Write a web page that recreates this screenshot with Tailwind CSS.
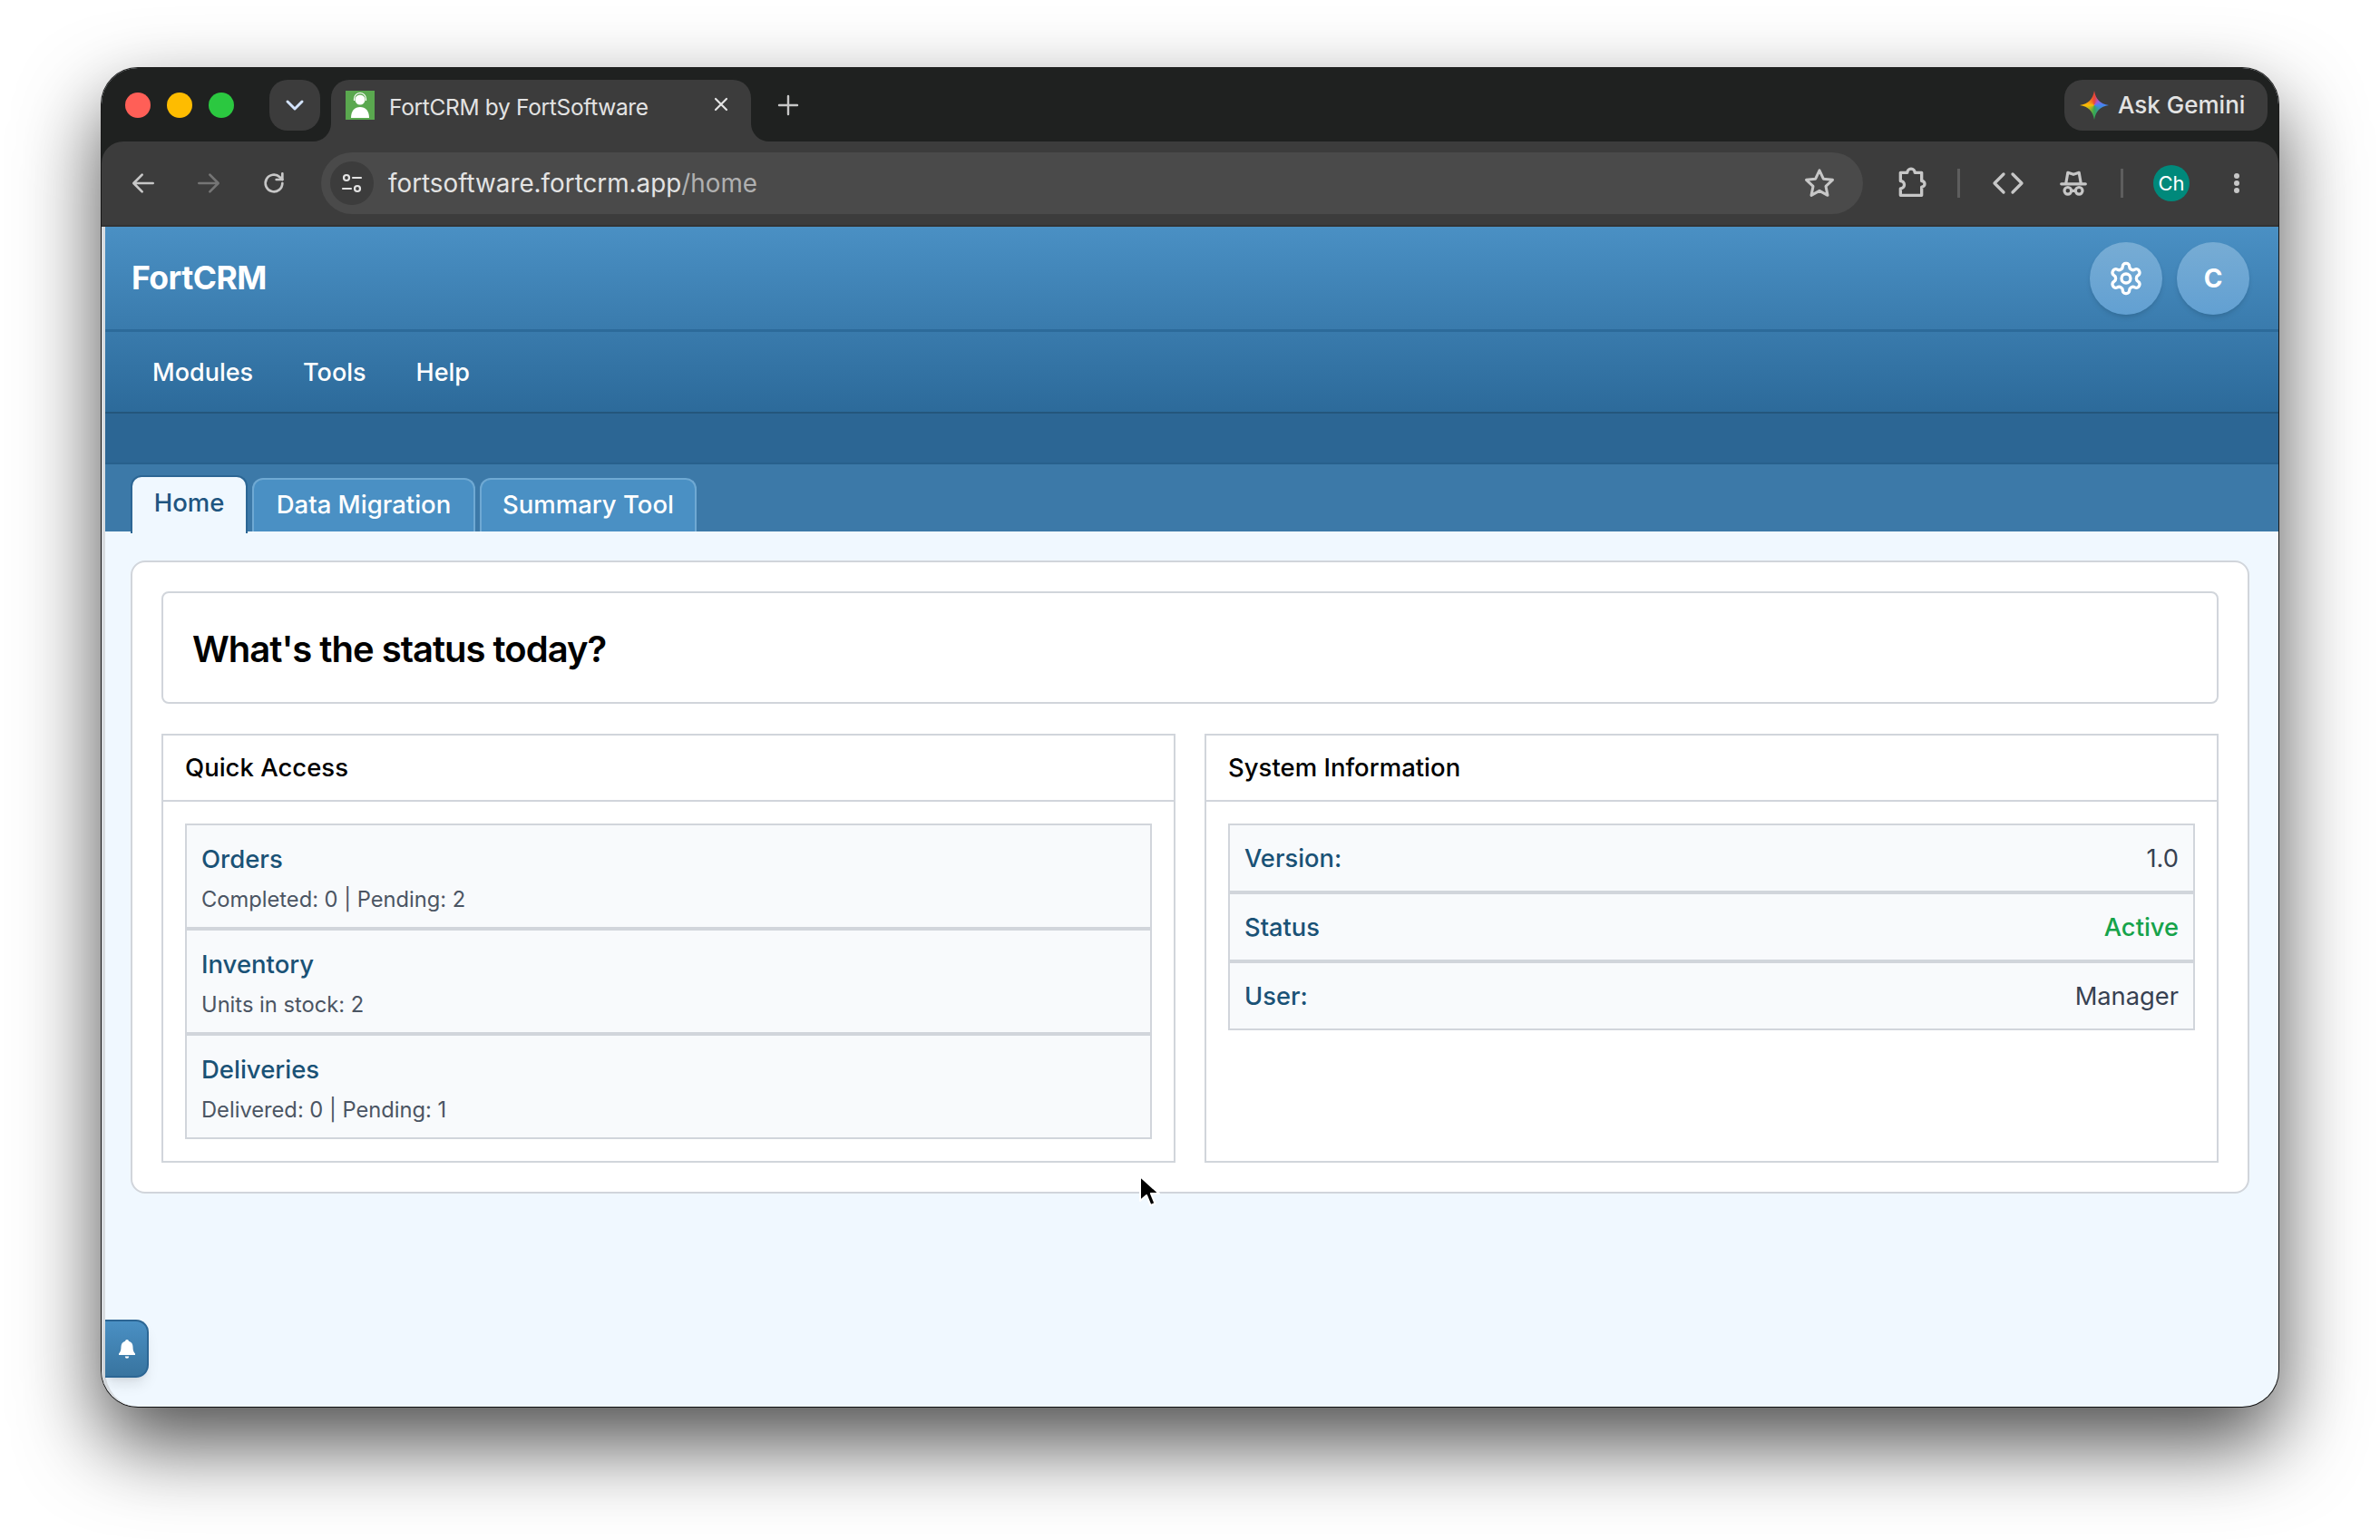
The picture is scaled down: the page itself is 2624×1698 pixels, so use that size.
<!DOCTYPE html>
<html lang="en">
<head>
    <meta charset="UTF-8">
    <title>FortCRM by FortSoftware</title>
    <script src="https://cdn.jsdelivr.net/npm/@tailwindcss/browser@4"></script>
</head>
<body class="bg-white h-[1698px] w-[2624px] overflow-hidden pl-[112px] pt-[75px] [font-family:Inter,sans-serif]">
    <!-- Browser window -->
    <div class="relative w-[2400px] h-[1476px] rounded-[40px] bg-[#f0f8ff] flex flex-col shadow-[0_40px_90px_rgba(0,0,0,0.7),0_0_0_1px_#222]">

        <!-- Tab strip -->
        <div class="h-[81px] shrink-0 rounded-t-[40px] bg-[#1f2120] flex pt-[13px] pl-[26px]">
            <div class="flex items-center gap-[18px] h-[56px]">
                <span class="w-7 h-7 rounded-full bg-[#ff5f57]"></span>
                <span class="w-7 h-7 rounded-full bg-[#febc00]"></span>
                <span class="w-7 h-7 rounded-full bg-[#2bc840]"></span>
            </div>
            <div class="ml-[39px] w-14 h-14 rounded-[20px] bg-[#3c3c3c] flex items-center justify-center">
                <svg class="w-6 h-6" viewBox="0 0 24 24" fill="none" stroke="#d3e3fd" stroke-width="3" stroke-linecap="round" stroke-linejoin="round"><path d="M4 8l8 8 8-8"/></svg>
            </div>
            <!-- Active tab -->
            <div class="relative ml-3 w-[463px] h-[68px] rounded-t-[20px] bg-[#3c3c3c] flex pl-4 pt-3 text-[#e3e3e3]">
                <svg class="absolute -left-5 bottom-0 w-5 h-5" viewBox="0 0 20 20"><path d="M20 0V20H0A20 20 0 0 0 20 0Z" fill="#3c3c3c"/></svg>
                <svg class="absolute -right-5 bottom-0 w-5 h-5" viewBox="0 0 20 20"><path d="M0 0V20H20A20 20 0 0 1 0 0Z" fill="#3c3c3c"/></svg>
                <svg class="w-8 h-8 shrink-0" viewBox="0 0 32 32">
                    <rect width="32" height="32" fill="#5aa84f"/>
                    <circle cx="16" cy="10" r="5.500" fill="#fff"/>
                    <path d="M9.500 11V9a6.500 6.500 0 0 1 13 0v2" fill="none" stroke="#fff" stroke-width="1.200"/>
                    <path d="M6 30c0-8 4-12 10-12s10 4 10 12Z" fill="#fff"/>
                </svg>
                <span class="ml-4 mt-[2px] text-[24.5px] tracking-[-0.33px] leading-8 whitespace-nowrap">FortCRM by FortSoftware</span>
                <svg class="absolute left-[420px] top-[17px] w-5 h-5" viewBox="0 0 20 20" stroke="#e3e3e3" stroke-width="2.200" stroke-linecap="round"><path d="M4 4l12 12M16 4L4 16"/></svg>
            </div>
            <svg class="ml-[29px] mt-[16px] w-6 h-6" viewBox="0 0 24 24" stroke="#c7c7c7" stroke-width="2.400" stroke-linecap="round"><path d="M12 2v20M2 12h20"/></svg>
            <div class="ml-auto mr-3 w-[224px] h-14 rounded-[20px] bg-[#3c3c3c] flex items-center pl-[17px] text-[#e3e3e3]">
                <span class="w-[32px] h-[32px] shrink-0 bg-[conic-gradient(#ea4335,#a259d9_12%,#4285f4_25%,#34a853_50%,#fbbc04_75%,#ea4335)] [clip-path:path('M16_0C17.5_9.500_22.500_14.500_32_16C22.500_17.500_17.500_22.500_16_32C14.500_22.500_9.500_17.500_0_16C9.500_14.500_14.500_9.500_16_0Z')]"></span>
                <span class="ml-[10px] -mt-[2px] text-[26px] font-medium whitespace-nowrap">Ask Gemini</span>
            </div>
        </div>

        <!-- Toolbar -->
        <div class="h-[94px] shrink-0 bg-[#1f2120]">
            <div class="h-[94px] rounded-t-[24px] bg-[#3c3c3c] flex items-center pl-[22px] border-b-2 border-[#333]">
                <div class="w-12 h-12 flex items-center justify-center">
                    <svg class="w-8 h-8" viewBox="0 0 24 24" fill="none" stroke="#c7c7c7" stroke-width="2" stroke-linecap="round" stroke-linejoin="round"><path d="M20 12H5M11 5l-7 7 7 7"/></svg>
                </div>
                <div class="ml-6 w-12 h-12 flex items-center justify-center">
                    <svg class="w-8 h-8" viewBox="0 0 24 24" fill="none" stroke="#757575" stroke-width="2" stroke-linecap="round" stroke-linejoin="round"><path d="M4 12h15M13 5l7 7-7 7"/></svg>
                </div>
                <div class="ml-6 w-12 h-12 flex items-center justify-center">
                    <svg class="w-8 h-8" viewBox="0 0 24 24" fill="none" stroke="#c7c7c7" stroke-width="2" stroke-linecap="round" stroke-linejoin="round"><path d="M19 12a7 7 0 1 1-2.200-5.100L19 9"/><path d="M19 4v5h-5"/></svg>
                </div>
                <!-- Address bar -->
                <div class="ml-7 w-[1700px] h-[68px] rounded-full bg-[#4a4a4a] flex items-center pl-[10px] pr-[28px]">
                    <div class="w-12 h-12 rounded-full bg-[#3c3c3c] flex items-center justify-center">
                        <svg class="w-7 h-7" viewBox="0 0 28 28" fill="none" stroke="#e3e3e3" stroke-width="2.200" stroke-linecap="round"><circle cx="8" cy="8" r="3"/><path d="M15 8h9M4 20h9"/><circle cx="20" cy="20" r="3"/></svg>
                    </div>
                    <div class="ml-[16px] mt-[2px] text-[27.8px] text-[#e3e3e3] whitespace-nowrap">fortsoftware.fortcrm.app<span class="text-[#b0b0b0]">/home</span></div>
                    <svg class="ml-auto w-10 h-10" viewBox="0 0 24 24" fill="none" stroke="#c7c7c7" stroke-width="1.800" stroke-linejoin="round"><path d="M12 3.500l2.600 5.600 6.100.7-4.500 4.200 1.200 6L12 17l-5.400 3 1.200-6-4.500-4.200 6.100-.7Z"/></svg>
                </div>
                <svg class="ml-[33px] w-10 h-10" viewBox="0 0 24 24" fill="none" stroke="#c7c7c7" stroke-width="2" stroke-linejoin="round"><path d="M5 5h4.500a2.500 2.500 0 0 1 5 0H19v5.500a2 2 0 0 1 0 4V20H5v-4.500a2.500 2.500 0 0 0 0-5Z"/></svg>
                <span class="ml-[31px] w-[3px] h-8 bg-[#5e5e5e]"></span>
                <svg class="ml-[33px] w-10 h-10" viewBox="0 0 24 24" fill="none" stroke="#c7c7c7" stroke-width="2" stroke-linecap="round" stroke-linejoin="round"><path d="M9 6l-6 6 6 6M15 6l6 6-6 6"/></svg>
                <svg class="ml-[32px] w-10 h-10" viewBox="0 0 24 24" fill="none" stroke="#c7c7c7" stroke-width="1.900" stroke-linecap="round" stroke-linejoin="round"><path d="M4 12.500h16M7 12.500l1.300-7.500 3.700 1.200L15.700 5 17 12.500"/><circle cx="8.300" cy="17" r="2.300"/><circle cx="15.700" cy="17" r="2.300"/><path d="M10.600 17h2.800"/></svg>
                <span class="ml-[32px] w-[3px] h-8 bg-[#5e5e5e]"></span>
                <div class="ml-[33px] w-10 h-10 rounded-full bg-[#00897b] flex items-center justify-center text-[22px] text-white">Ch</div>
                <svg class="ml-[48px] w-2 h-6" viewBox="0 0 8 24" fill="#c7c7c7"><circle cx="4" cy="4" r="3"/><circle cx="4" cy="12" r="3"/><circle cx="4" cy="20" r="3"/></svg>
            </div>
        </div>

        <!-- Page -->
        <div class="flex-1 flex border-l-[4px] border-[#d8dce0] rounded-b-[40px] overflow-hidden min-h-0">
            <div class="flex-1 flex flex-col min-w-0">
                <!-- Header and nav share one gradient -->
                <div class="bg-linear-to-b from-[#4a90c4] to-[#2c6a9a]">
                    <header class="h-[116px] border-b-[3px] border-[#2c6a9a] flex items-center justify-between pl-[29px] pr-8">
                        <div class="text-[35.5px] font-bold tracking-[-0.5px] text-white">FortCRM</div>
                        <div class="flex gap-4">
                            <div class="w-20 h-20 rounded-full bg-linear-to-b from-[#77acd4] to-[#62a0d2] shadow-md flex items-center justify-center">
                                <svg class="w-10 h-10" viewBox="0 0 24 24" fill="none" stroke="#fff" stroke-width="2" stroke-linecap="round" stroke-linejoin="round"><path d="M12.220 2h-.44a2 2 0 0 0-2 2v.18a2 2 0 0 1-1 1.730l-.43.25a2 2 0 0 1-2 0l-.15-.08a2 2 0 0 0-2.730.73l-.22.38a2 2 0 0 0 .73 2.730l.15.1a2 2 0 0 1 1 1.720v.51a2 2 0 0 1-1 1.740l-.15.09a2 2 0 0 0-.73 2.730l.22.38a2 2 0 0 0 2.730.73l.15-.08a2 2 0 0 1 2 0l.43.25a2 2 0 0 1 1 1.730V20a2 2 0 0 0 2 2h.44a2 2 0 0 0 2-2v-.18a2 2 0 0 1 1-1.730l.43-.25a2 2 0 0 1 2 0l.15.08a2 2 0 0 0 2.730-.73l.22-.39a2 2 0 0 0-.73-2.730l-.15-.08a2 2 0 0 1-1-1.740v-.5a2 2 0 0 1 1-1.740l.15-.09a2 2 0 0 0 .73-2.730l-.22-.38a2 2 0 0 0-2.730-.73l-.15.08a2 2 0 0 1-2 0l-.43-.25a2 2 0 0 1-1-1.730V4a2 2 0 0 0-2-2z"/><circle cx="12" cy="12" r="3"/></svg>
                            </div>
                            <div class="w-20 h-20 rounded-full bg-linear-to-b from-[#77acd4] to-[#62a0d2] shadow-md flex items-center justify-center text-white text-[28px] font-bold">C</div>
                        </div>
                    </header>
                    <nav class="h-[90px] border-b-2 border-[#24567c] flex items-center pl-[52px] gap-[55px] text-[27px] font-medium text-white">
                        <span class="mt-[3px]">Modules</span>
                        <span class="mt-[3px]">Tools</span>
                        <span class="mt-[3px]">Help</span>
                    </nav>
                </div>
                <div class="h-[56px] shrink-0 bg-[#2c6694] border-b-2 border-[#28608c]"></div>
                <!-- Tabs -->
                <div class="h-[74px] shrink-0 bg-[#3c79a8] flex items-end pl-[28px] gap-[5px] text-[27.5px] font-medium">
                    <div class="relative -mb-[2px] w-[129px] h-[64px] rounded-t-[12px] bg-[#f0f8ff] border-t-2 border-x-2 border-[#2c6694] border-b-0 flex items-center justify-center pb-[4px] text-[#1f5580]">Home</div>
                    <div class="w-[246px] h-[59px] rounded-t-[12px] bg-[#4a90c4] border-t-2 border-x-2 border-[#6fa9d3] flex items-center justify-center pb-[2px] text-white">Data Migration</div>
                    <div class="w-[239px] h-[59px] rounded-t-[12px] bg-[#4a90c4] border-t-2 border-x-2 border-[#6fa9d3] flex items-center justify-center pb-[2px] text-white">Summary Tool</div>
                </div>
                <!-- Content -->
                <main class="flex-1 pt-8 pl-[28px] pr-8">
                    <div class="h-[698px] rounded-[16px] bg-white border-2 border-[#d1d5db] p-8">
                        <div class="h-[124px] pt-[3px] rounded-[8px] border-2 border-[#d1d5db] flex items-center pl-8 text-[40px] font-semibold tracking-[-1px] text-black">What's the status today?</div>
                        <div class="mt-[33px] grid grid-cols-2 gap-8">
                            <section class="h-[473px] border-2 border-[#d1d5db]">
                                <div class="h-[73px] pt-[1px] border-b-2 border-[#d1d5db] flex items-center pl-6 text-[27.5px] font-medium text-black">Quick Access</div>
                                <div class="p-6">
                                    <div class="h-[116px] bg-[#f8fafc] border-2 border-[#d1d5db] pl-4 pt-[16px]">
                                        <div class="text-[27.5px] leading-[42px] font-medium text-[#1a5276]">Orders</div>
                                        <div class="mt-[4px] text-[23.7px] leading-[40px] text-[#4b5563]">Completed: 0 | Pending: 2</div>
                                    </div>
                                    <div class="h-[116px] bg-[#f8fafc] border-2 border-[#d1d5db] pl-4 pt-[16px]">
                                        <div class="text-[27.5px] leading-[42px] font-medium text-[#1a5276]">Inventory</div>
                                        <div class="mt-[4px] text-[23.7px] leading-[40px] text-[#4b5563]">Units in stock: 2</div>
                                    </div>
                                    <div class="h-[116px] bg-[#f8fafc] border-2 border-[#d1d5db] pl-4 pt-[16px]">
                                        <div class="text-[27.5px] leading-[42px] font-medium text-[#1a5276]">Deliveries</div>
                                        <div class="mt-[4px] text-[23.7px] leading-[40px] text-[#4b5563]">Delivered: 0 | Pending: 1</div>
                                    </div>
                                </div>
                            </section>
                            <section class="h-[473px] border-2 border-[#d1d5db]">
                                <div class="h-[73px] pt-[1px] border-b-2 border-[#d1d5db] flex items-center pl-6 text-[27.5px] font-medium text-black">System Information</div>
                                <div class="p-6 text-[27.3px]">
                                    <div class="h-[76px] pt-[2px] bg-[#f8fafc] border-2 border-[#d1d5db] flex items-center justify-between px-4">
                                        <span class="font-medium text-[#1a5276]">Version:</span><span class="text-[#374151]">1.0</span>
                                    </div>
                                    <div class="h-[76px] pt-[2px] bg-[#f8fafc] border-2 border-[#d1d5db] flex items-center justify-between px-4">
                                        <span class="font-medium text-[#1a5276]">Status</span><span class="font-medium text-[#16a34a]">Active</span>
                                    </div>
                                    <div class="h-[76px] pt-[2px] bg-[#f8fafc] border-2 border-[#d1d5db] flex items-center justify-between px-4">
                                        <span class="font-medium text-[#1a5276]">User:</span><span class="text-[#374151]">Manager</span>
                                    </div>
                                </div>
                            </section>
                        </div>
                    </div>
                </main>
            </div>
        </div>

        <!-- Notification toggle -->
        <div class="absolute left-1 top-[1380px] w-12 h-16 pl-[2px] rounded-r-[14px] bg-linear-to-b from-[#4a90c4] to-[#38749f] border-2 border-l-0 border-[#2c6694] shadow-lg flex items-center justify-center">
            <svg class="w-6 h-6" viewBox="0 0 24 24" fill="#fff"><path d="M12 2a2 2 0 0 1 2 1.800c3 .8 4.500 3.400 4.500 6.200 0 4 1 6 2.500 7.500V19H3v-1.500C4.500 16 5.500 14 5.500 10c0-2.800 1.500-5.400 4.500-6.200A2 2 0 0 1 12 2ZM9.800 20.500h4.400a2.200 2.200 0 0 1-4.400 0Z"/></svg>
        </div>
    </div>

    <!-- Mouse pointer -->
    <svg class="absolute left-[1254px] top-[1295px] w-[26px] h-[38px]" viewBox="0 0 26 38"><path d="M3 2v27l7-6 4.500 11 5-2-4.500-11h9Z" fill="#000" stroke="#fff" stroke-width="2" stroke-linejoin="round"/></svg>
</body>
</html>
